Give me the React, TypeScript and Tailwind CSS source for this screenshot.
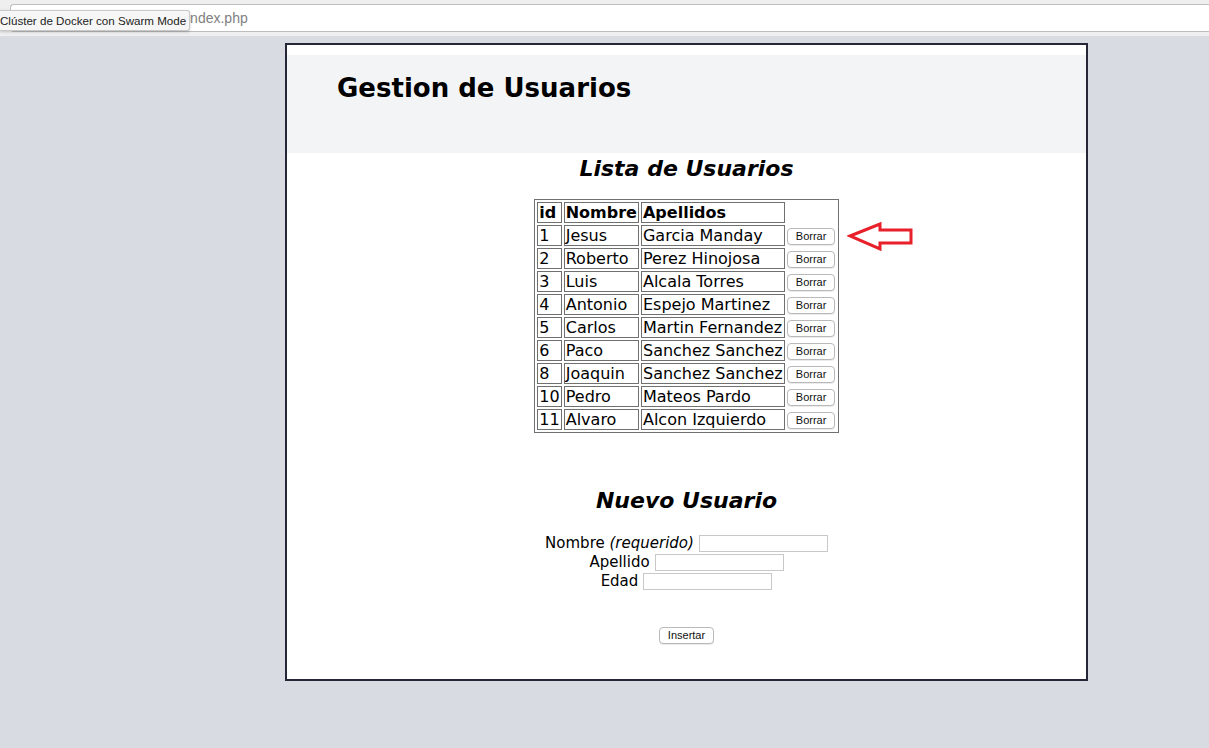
import React from 'react';

const usuarios = [
  { id: 1, nombre: 'Jesus', apellidos: 'Garcia Manday' },
  { id: 2, nombre: 'Roberto', apellidos: 'Perez Hinojosa' },
  { id: 3, nombre: 'Luis', apellidos: 'Alcala Torres' },
  { id: 4, nombre: 'Antonio', apellidos: 'Espejo Martinez' },
  { id: 5, nombre: 'Carlos', apellidos: 'Martin Fernandez' },
  { id: 6, nombre: 'Paco', apellidos: 'Sanchez Sanchez' },
  { id: 8, nombre: 'Joaquin', apellidos: 'Sanchez Sanchez' },
  { id: 10, nombre: 'Pedro', apellidos: 'Mateos Pardo' },
  { id: 11, nombre: 'Alvaro', apellidos: 'Alcon Izquierdo' },
];

const cell = 'border border-[#707070] px-px h-[21px] leading-[17px] align-middle';

function Boton({ label }: { label: string }) {
  return (
    <button className="h-[17px] px-[8px] rounded-[4px] border border-[#b9b9b9] bg-white shadow-[0_1px_0_rgba(0,0,0,0.08)] text-[11px] leading-none text-[#111] font-['Liberation_Sans',sans-serif]">
      {label}
    </button>
  );
}

export default function App() {
  return (
    <div className="min-h-[748px] bg-[#d8dbe2] font-['DejaVu_Sans',sans-serif] text-black">
      {/* Browser bar */}
      <div className="relative h-[36px] bg-[#efefef] pt-[4px]">
        <div className="ml-[10px] h-[28px] bg-white border border-r-0 border-[#bdbdbd] rounded-l-[4px] flex items-center pl-[176px] text-[14px] text-[#808080] font-['Liberation_Sans',sans-serif]">
          index.php
        </div>
        {/* Tooltip */}
        <div className="absolute left-0 top-[10px] h-[21px] w-[190px] bg-[#f6f6f6] border border-l-0 border-[#c9c9c9] rounded-r-[3px] shadow-[0_1px_3px_rgba(0,0,0,0.2)] flex items-center pl-0 text-[11.6px] text-[#222] font-['Liberation_Sans',sans-serif] whitespace-nowrap">
          Clúster de Docker con Swarm Mode
        </div>
      </div>

      {/* Card */}
      <div className="ml-[285px] mt-[7px] w-[803px] h-[638px] border-2 border-[#262639] bg-white pt-[10px]">
        <div className="h-[98px] bg-[#f3f4f6] pl-[50px] pt-[16px]">
          <h1 className="text-[26px] leading-[34px] font-bold">Gestion de Usuarios</h1>
        </div>

        <div className="flex flex-col items-center">
          <h2 className="mt-[2px] text-[22px] leading-[28px] font-bold italic">Lista de Usuarios</h2>

          <div className="relative mt-[16px]">
            <table className="border border-[#707070] border-separate border-spacing-[2px] text-[16px] leading-[17px]">
              <thead>
                <tr>
                  <th className={`${cell} text-left font-bold`}>id</th>
                  <th className={`${cell} text-left font-bold`}>Nombre</th>
                  <th className={`${cell} text-left font-bold`}>Apellidos</th>
                  <th className="w-[49px] p-0"></th>
                </tr>
              </thead>
              <tbody>
                {usuarios.map((u) => (
                  <tr key={u.id}>
                    <td className={cell}>{u.id}</td>
                    <td className={cell}>{u.nombre}</td>
                    <td className={cell}>{u.apellidos}</td>
                    <td className="p-0 h-[21px] align-middle text-center">
                      <Boton label="Borrar" />
                    </td>
                  </tr>
                ))}
              </tbody>
            </table>

            {/* Red arrow annotation */}
            <svg
              className="absolute left-full ml-[8px] top-[22px]"
              width="70"
              height="32"
              viewBox="0 0 70 32"
            >
              <polygon
                points="3,15 33,3 33,9 64,9 64,22 33,22 33,28"
                fill="none"
                stroke="#e8202a"
                strokeWidth="3"
                strokeLinejoin="miter"
              />
            </svg>
          </div>

          <h2 className="mt-[54px] text-[22px] leading-[28px] font-bold italic">Nuevo Usuario</h2>

          <form className="mt-[19px] flex flex-col items-center text-[15px] leading-[19px]">
            <label className="flex items-center gap-[5px]">
              <span>
                Nombre <i>(requerido)</i>
              </span>
              <input className="w-[129px] h-[17px] border border-[#c8c8c8] bg-white" />
            </label>
            <label className="flex items-center gap-[5px]">
              <span>Apellido</span>
              <input className="w-[129px] h-[17px] border border-[#c8c8c8] bg-white" />
            </label>
            <label className="flex items-center gap-[5px]">
              <span>Edad</span>
              <input className="w-[129px] h-[17px] border border-[#c8c8c8] bg-white" />
            </label>
            <div className="mt-[34px]">
              <Boton label="Insertar" />
            </div>
          </form>
        </div>
      </div>
    </div>
  );
}
